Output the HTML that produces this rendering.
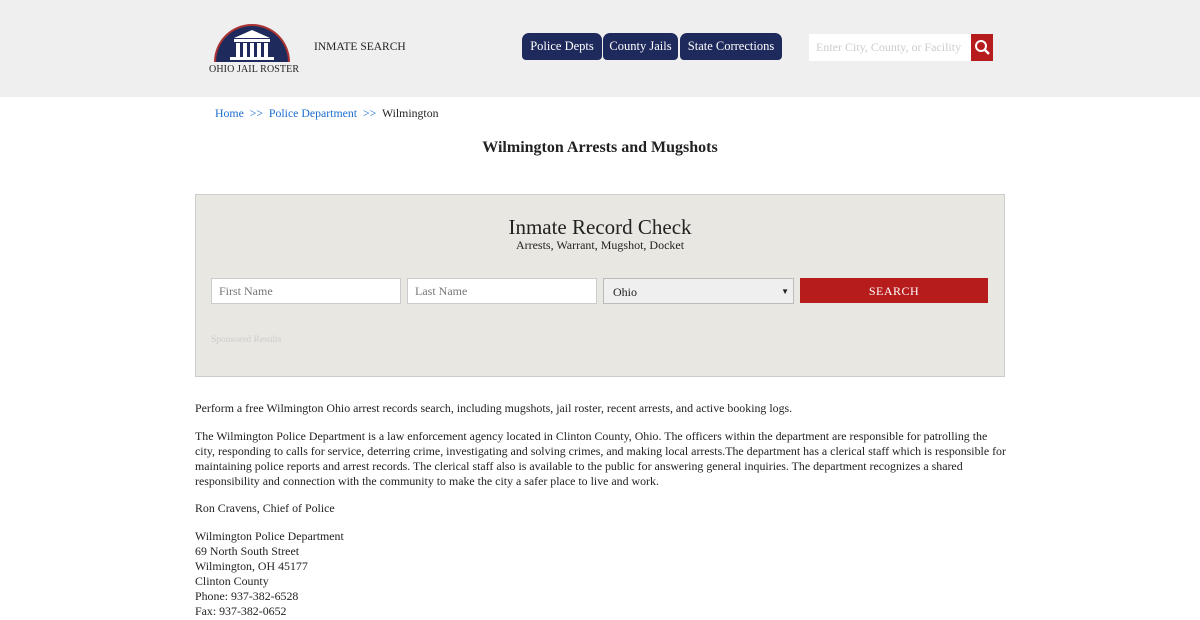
<!DOCTYPE html>
<html><head><meta charset="utf-8"><style>
body{margin:0;background:#fff;font-family:"Liberation Serif",serif;color:#222;width:1200px;height:620px;overflow:hidden;position:relative}
.hdr{position:absolute;left:0;top:0;width:1200px;height:97px;background:#efefef}
.abs{position:absolute;white-space:nowrap}
.tab{position:absolute;top:33px;height:27px;background:#1f2a5c;color:#fff;font-size:12.5px;line-height:27px;text-align:center;border-radius:7px 7px 4px 4px;white-space:nowrap}
.txt{position:absolute;left:195px;font-size:11.9px;line-height:15px;width:815px}
</style></head><body>
<div class="hdr"></div>
<svg class="abs" style="left:210px;top:20px" width="84" height="56" viewBox="0 0 84 56">
<path d="M4 42 A38 38 0 0 1 80 42 Z" fill="#a33"/>
<path d="M6 42 A36 36 0 0 1 78 42 Z" fill="#1f2a5c"/>
<polygon points="24,18 42,10 60,18" fill="#fff"/>
<rect x="24" y="19" width="36" height="3" fill="#fff"/>
<rect x="26" y="23" width="4" height="14" fill="#fff"/><rect x="33" y="23" width="4" height="14" fill="#fff"/><rect x="40" y="23" width="4" height="14" fill="#fff"/><rect x="47" y="23" width="4" height="14" fill="#fff"/><rect x="54" y="23" width="4" height="14" fill="#fff"/>
<rect x="20" y="37" width="44" height="3" fill="#fff"/>
</svg>
<div class="abs" style="left:209px;top:64px;font-size:10px;color:#222;letter-spacing:0.1px">OHIO JAIL ROSTER</div>
<div class="abs" style="left:314px;top:41px;font-size:11.5px">INMATE SEARCH</div>
<div class="tab" style="left:522px;width:80px">Police Depts</div>
<div class="tab" style="left:603px;width:75px">County Jails</div>
<div class="tab" style="left:680px;width:102px">State Corrections</div>
<div class="abs" style="left:809px;top:34px;width:162px;height:27px;background:#fff;font-size:12px;color:#ccc;line-height:27px;text-indent:7px;overflow:hidden">Enter City, County, or Facility</div>
<div class="abs" style="left:971px;top:34px;width:22px;height:27px;background:#b71c1c"><svg width="22" height="27"><circle cx="10" cy="12" r="5" stroke="#fff" stroke-width="2" fill="none"/><line x1="14" y1="16" x2="18" y2="20" stroke="#fff" stroke-width="2.5"/></svg></div>
<div class="abs" style="left:215px;top:106px;font-size:11.8px;color:#1a6ccf">Home &nbsp;&gt;&gt;&nbsp; Police Department &nbsp;&gt;&gt;&nbsp; <span style="color:#222">Wilmington</span></div>
<div class="abs" style="left:0;width:1200px;top:139px;text-align:center;font-size:16px;font-weight:bold">Wilmington Arrests and Mugshots</div>
<div class="abs" style="left:195px;top:194px;width:808px;height:181px;background:#e8e7e1;border:1px solid #ccc"></div>
<div class="abs" style="left:0;width:1200px;top:215px;text-align:center;font-size:21px">Inmate Record Check</div>
<div class="abs" style="left:0;width:1200px;top:238px;text-align:center;font-size:12px">Arrests, Warrant, Mugshot, Docket</div>
<div class="abs" style="left:211px;top:278px;width:188px;height:24px;background:#fff;border:1px solid #ccc;font-size:12px;color:#777;line-height:24px;text-indent:7px">First Name</div>
<div class="abs" style="left:407px;top:278px;width:188px;height:24px;background:#fff;border:1px solid #ccc;font-size:12px;color:#777;line-height:24px;text-indent:7px">Last Name</div>
<div class="abs" style="left:603px;top:278px;width:189px;height:24px;background:#efefef;border:1px solid #bbb;font-size:12px;line-height:26px;text-indent:9px">Ohio<span style="position:absolute;right:4px;font-size:8px">&#9660;</span></div>
<div class="abs" style="left:800px;top:278px;width:188px;height:25px;background:#b71c1c;color:#fff;font-size:12px;line-height:27px;text-align:center;letter-spacing:0.5px">SEARCH</div>
<div class="abs" style="left:211px;top:335px;font-size:9.5px;color:#ccc">Sponsored Results</div>
<div class="txt" style="top:401px">Perform a free Wilmington Ohio arrest records search, including mugshots, jail roster, recent arrests, and active booking logs.</div>
<div class="txt" style="top:429px">The Wilmington Police Department is a law enforcement agency located in Clinton County, Ohio. The officers within the department are responsible for patrolling the city, responding to calls for service, deterring crime, investigating and solving crimes, and making local arrests.The department has a clerical staff which is responsible for maintaining police reports and arrest records. The clerical staff also is available to the public for answering general inquiries. The department recognizes a shared responsibility and connection with the community to make the city a safer place to live and work.</div>
<div class="txt" style="top:501px">Ron Cravens, Chief of Police</div>
<div class="txt" style="top:529px">Wilmington Police Department<br>69 North South Street<br>Wilmington, OH 45177<br>Clinton County<br>Phone: 937-382-6528<br>Fax: 937-382-0652</div>
</body></html>
